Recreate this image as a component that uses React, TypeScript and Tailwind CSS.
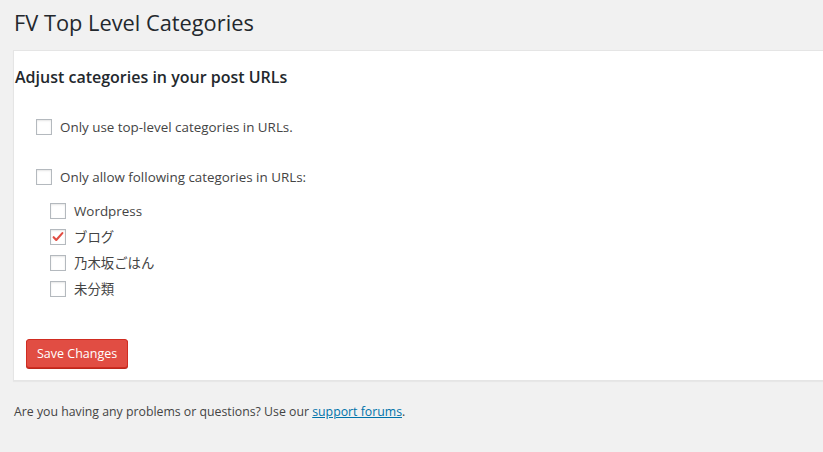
import { useState } from "react";

const font = "font-['Open_Sans','Noto_Sans','Noto_Sans_CJK_JP',sans-serif]";

function Box({ checked, onChange }: { checked: boolean; onChange: () => void }) {
  return (
    <button
      type="button"
      onClick={onChange}
      className="flex h-4 w-4 shrink-0 items-center justify-center border border-[#b4b9be] bg-white shadow-[inset_0_1px_2px_rgba(0,0,0,0.1)]"
    >
      {checked && (
        <svg viewBox="0 0 16 16" className="h-[14px] w-[14px]">
          <path d="M3 8.2l3 3.2L13 3.6" fill="none" stroke="#e14d43" strokeWidth="2.4" strokeLinecap="round" strokeLinejoin="round" />
        </svg>
      )}
    </button>
  );
}

export default function App() {
  const [top, setTop] = useState(false);
  const [allow, setAllow] = useState(false);
  const [cats, setCats] = useState([
    { name: "Wordpress", on: false },
    { name: "ブログ", on: true },
    { name: "乃木坂ごはん", on: false },
    { name: "未分類", on: false },
  ]);

  return (
    <div className={`min-h-[452px] overflow-hidden bg-[#f1f1f1] text-[13.4px] text-[#444] ${font}`}>
      <h1 className="pl-[14px] pt-[8px] text-[21.8px] leading-[29px] font-normal text-[#23282d]">
        FV Top Level Categories
      </h1>

      <div className="ml-[13px] mt-[13px] w-[830px] border border-[#e5e5e5] bg-white shadow-[0_1px_1px_rgba(0,0,0,0.04)]">
        <h2 className="pl-[1px] pt-[15px] text-[16px] leading-[22px] font-semibold text-[#23282d]">
          Adjust categories in your post URLs
        </h2>

        <div className="pl-[22px] pt-[31px]">
          <label className="flex h-[16px] items-center gap-[8px]">
            <Box checked={top} onChange={() => setTop(!top)} />
            <span>Only use top-level categories in URLs.</span>
          </label>

          <label className="mt-[34px] flex h-[16px] items-center gap-[8px]">
            <Box checked={allow} onChange={() => setAllow(!allow)} />
            <span>Only allow following categories in URLs:</span>
          </label>

          <ul className="mt-[18px] flex flex-col gap-[10px] pl-[14px]">
            {cats.map((c, i) => (
              <li key={c.name} className="flex h-[16px] items-center gap-[8px]">
                <Box
                  checked={c.on}
                  onChange={() => setCats(cats.map((x, j) => (j === i ? { ...x, on: !x.on } : x)))}
                />
                <span>{c.name}</span>
              </li>
            ))}
          </ul>

          <button
            type="button"
            className="mt-[42px] mb-[12px] ml-[-10px] h-[29px] rounded-[3px] border border-[#d02c21] bg-[#e14d43] px-[10px] text-[12.5px] leading-[26px] text-white shadow-[0_1px_0_#ba281e]"
          >
            Save Changes
          </button>
        </div>
      </div>

      <p className="pl-[14px] pt-[21px] text-[12.3px] leading-[20px] text-[#444]">
        Are you having any problems or questions? Use our{" "}
        <a href="#" className="text-[#0073aa] underline">
          support forums
        </a>
        .
      </p>
    </div>
  );
}
